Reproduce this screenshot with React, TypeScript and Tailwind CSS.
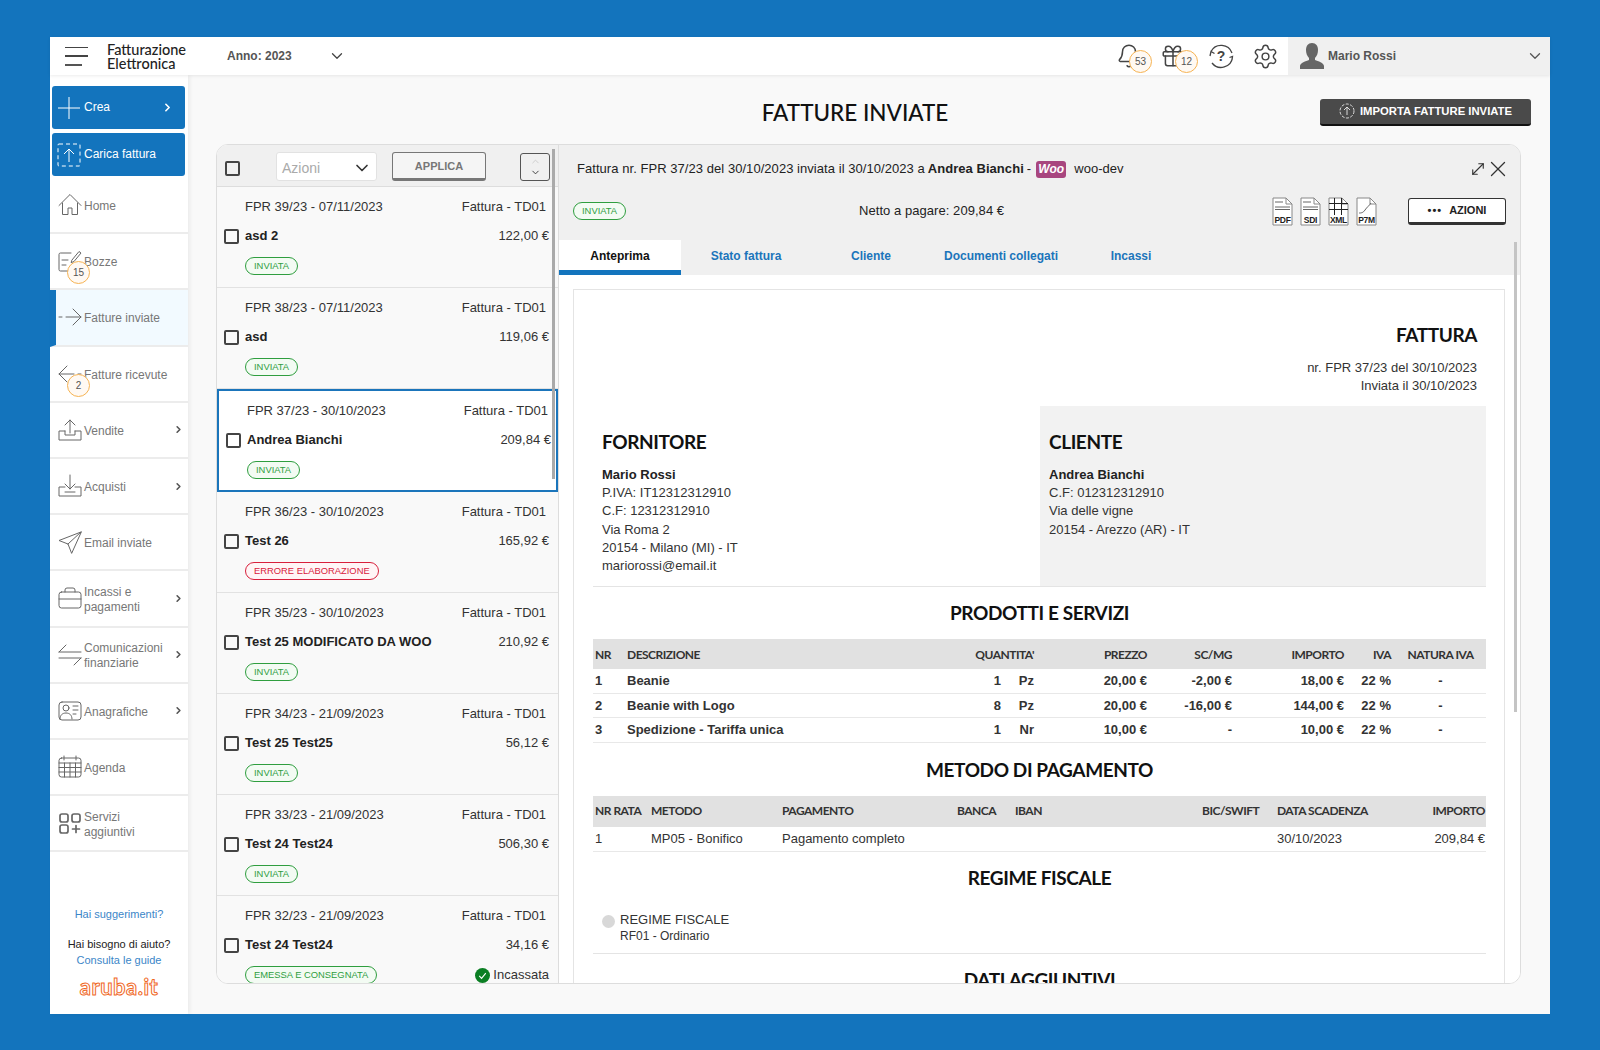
import {
  Bell,
  ChevronDown,
  ChevronRight,
  ChevronUp,
  Gift,
  MoveDiagonal,
  Settings,
  X,
} from "lucide-react";
import type { ReactNode } from "react";

type Invoice = {
  code: string;
  name: string;
  amount: string;
  status: string;
  tone?: "green" | "red";
  selected?: boolean;
  paid?: boolean;
};

const invoices: Invoice[] = [
  { code: "FPR 39/23 - 07/11/2023", name: "asd 2", amount: "122,00 €", status: "INVIATA" },
  { code: "FPR 38/23 - 07/11/2023", name: "asd", amount: "119,06 €", status: "INVIATA" },
  { code: "FPR 37/23 - 30/10/2023", name: "Andrea Bianchi", amount: "209,84 €", status: "INVIATA", selected: true },
  { code: "FPR 36/23 - 30/10/2023", name: "Test 26", amount: "165,92 €", status: "ERRORE ELABORAZIONE", tone: "red" },
  { code: "FPR 35/23 - 30/10/2023", name: "Test 25 MODIFICATO DA WOO", amount: "210,92 €", status: "INVIATA" },
  { code: "FPR 34/23 - 21/09/2023", name: "Test 25 Test25", amount: "56,12 €", status: "INVIATA" },
  { code: "FPR 33/23 - 21/09/2023", name: "Test 24 Test24", amount: "506,30 €", status: "INVIATA" },
  { code: "FPR 32/23 - 21/09/2023", name: "Test 24 Test24", amount: "34,16 €", status: "EMESSA E CONSEGNATA", paid: true },
];

const products = [
  ["1", "Beanie", "1", "Pz", "20,00 €", "-2,00 €", "18,00 €", "22 %", "-"],
  ["2", "Beanie with Logo", "8", "Pz", "20,00 €", "-16,00 €", "144,00 €", "22 %", "-"],
  ["3", "Spedizione - Tariffa unica", "1", "Nr", "10,00 €", "-", "10,00 €", "22 %", "-"],
];

const Icon = ({ children, size = 24 }: { children: ReactNode; size?: number }) => (
  <svg
    width={size}
    height={size}
    viewBox="0 0 24 24"
    fill="none"
    stroke="currentColor"
    strokeWidth="1"
    strokeLinecap="round"
    strokeLinejoin="round"
  >
    {children}
  </svg>
);

const navIcons: Record<string, ReactNode> = {
  home: <path d="M1 12.500 12 1.500l11 11M4.500 10v11.500h5.500V15h4v6.500h5.500V10" />,
  draft: (
    <>
      <path d="M13 4H2.500A1.500 1.500 0 0 0 1 5.500v15A1.500 1.500 0 0 0 2.500 22H14M4 11h6M4 16h4" />
      <path d="m14 11 7-8.500 2 1.500-7 8.500-2.500 1z" />
    </>
  ),
  sent: <path d="M1 12h3M8 12h15M15 4l8 8-8 8" />,
  received: <path d="M23 12h-3M16 12H1M9 4l-8 8 8 8" />,
  sales: <path d="M12 15V2M7 7l5-5 5 5M7 13H1v9h22v-9h-6M7 13v4h10v-4" />,
  buy: <path d="M12 1v14M7 10l5 5 5-5M7 13H1v9h22v-9h-6M7 18h10" />,
  mail: <path d="M23 2 1 10.500l9 3.500 3.500 9zM10 14 23 2" />,
  case: (
    <>
      <rect x="1" y="6" width="22" height="16" rx="2.500" />
      <path d="M7 6V4a2 2 0 0 1 2-2h6a2 2 0 0 1 2 2v2M1 13h22" />
    </>
  ),
  swap: <path d="M1 9h22M8 2 1 9M23 15H1M16 22l7-7" />,
  card: (
    <>
      <rect x="1" y="3" width="22" height="18" rx="3" />
      <circle cx="8" cy="9" r="3" />
      <path d="M2 20c0-4 2.500-6 6-6s6 2 6 6M15 7h5M15 11h5M15 15h3" />
    </>
  ),
  calendar: (
    <>
      <rect x="1" y="3" width="22" height="19" rx="2.500" />
      <path d="M6 1v4M18 1v4M1 8h22M1 12.500h22M1 17h22M6.500 8v14M12 8v14M17.500 8v14" />
    </>
  ),
  services: (
    <g strokeWidth="1.700">
      <rect x="2" y="3" width="8" height="8" rx="2" />
      <rect x="14" y="3" width="8" height="8" rx="2" />
      <rect x="2" y="14" width="8" height="8" rx="2" />
      <path d="M18 14.500v7M14.500 18h7" />
    </g>
  ),
};

const navItems = [
  { id: "home", label: "Home" },
  { id: "draft", label: "Bozze", badge: "15" },
  { id: "sent", label: "Fatture inviate", active: true },
  { id: "received", label: "Fatture ricevute", badge: "2" },
  { id: "sales", label: "Vendite", arrow: true },
  { id: "buy", label: "Acquisti", arrow: true },
  { id: "mail", label: "Email inviate" },
  { id: "case", label: "Incassi e pagamenti", arrow: true },
  { id: "swap", label: "Comunicazioni finanziarie", arrow: true },
  { id: "card", label: "Anagrafiche", arrow: true },
  { id: "calendar", label: "Agenda" },
  { id: "services", label: "Servizi aggiuntivi" },
];

const CountBadge = ({ value, className }: { value: string; className?: string }) => (
  <span
    className={`flex h-[23px] w-[23px] items-center justify-center rounded-full border border-[#f6b352] bg-[#fff9f3] text-[10px] text-[#555] ${className}`}
  >
    {value}
  </span>
);

const Checkbox = () => (
  <span className="block h-[15px] w-[15px] shrink-0 rounded-[2px] border-2 border-[#444]" />
);

const StatusPill = ({ label, tone = "green" }: { label: string; tone?: "green" | "red" }) => (
  <span
    className={`inline-flex h-[18px] items-center rounded-full border px-[8px] text-[9.400px] ${
      tone === "red"
        ? "border-[#d8203c] bg-[#fff5f6] text-[#d8203c]"
        : "border-[#2f9e3f] bg-[#f3fbf3] text-[#2f9e3f]"
    }`}
  >
    {label}
  </span>
);

const InvoiceRow = ({ invoice }: { invoice: Invoice }) => (
  <div
    className={
      invoice.selected
        ? "h-[103px] shrink-0 border-2 border-[#1b75bb] bg-white pl-[7px] pr-[5px] pt-[10px]"
        : "h-[101px] shrink-0 border-b border-[#e2e2e2] pl-[7px] pr-[9px] pt-[10px]"
    }
  >
    <div className="flex h-[20px] items-center justify-between text-[13px] text-[#333]">
      <span className="pl-[21px]">{invoice.code}</span>
      <span className="pr-[3px]">Fattura - TD01</span>
    </div>
    <div className="mt-[9px] flex h-[20px] items-center">
      <span className="w-[21px]">
        <Checkbox />
      </span>
      <span className="flex-1 text-[13px] font-bold text-[#222]">{invoice.name}</span>
      <span className="text-[13px] text-[#333]">{invoice.amount}</span>
    </div>
    <div className="mt-[11px] flex h-[18px] items-center justify-between pl-[21px]">
      <StatusPill label={invoice.status} tone={invoice.tone} />
      {invoice.paid && (
        <span className="flex items-center gap-[3px] text-[13px] text-[#333]">
          <svg width="15" height="15" viewBox="0 0 16 16">
            <circle cx="8" cy="8" r="8" fill="#0b7f24" />
            <path d="m4.500 8.500 2.500 2.500 4.500-5.500" fill="none" stroke="#fff" strokeWidth="1.200" />
          </svg>
          Incassata
        </span>
      )}
    </div>
  </div>
);

const FileIcon = ({ label }: { label: string }) => (
  <svg width="21" height="29" viewBox="0 0 21 29">
    <path d="M1 1h13l6 6v21H1z" fill="#fff" stroke="#888" />
    <path d="M14 1v6h6" fill="none" stroke="#888" />
    {label === "XML" ? (
      <path d="M1 6.500h19M1 12.500h19M6.500 1v17M13.500 1v17" stroke="#222" fill="none" />
    ) : label === "P7M" ? (
      <path d="M3 16c2 0 4 0 6-3s4-4 6-7" stroke="#666" fill="none" />
    ) : (
      <path d="M3 5h8M3 10h15M3 12.500h15" stroke="#666" fill="none" />
    )}
    <text x="10.500" y="25.500" textAnchor="middle" fontSize="8.500" fontWeight="700" fill="#222" stroke="none" letterSpacing="-0.3">
      {label}
    </text>
  </svg>
);

const Heading = ({ children, className }: { children: ReactNode; className?: string }) => (
  <h2 className={`font-['Lato',sans-serif] text-[19px] font-bold leading-[24px] tracking-[-0.4px] text-[#111] ${className}`}>
    {children}
  </h2>
);

const headCell = "font-['Lato',sans-serif] text-[12px] font-bold tracking-[-0.5px] text-[#333]";
const productCols = "grid grid-cols-[34px_333px_41px_33px_113px_85px_112px_47px_96px] items-center";
const paymentCols = "grid grid-cols-[58px_131px_175px_58px_187px_75px_104px_106px] items-center";

const Sidebar = () => (
  <aside className="z-10 flex w-[138px] shrink-0 flex-col bg-white shadow-[2px_0_4px_rgba(0,0,0,0.06)]">
    <div className="flex flex-col gap-[4px] pl-[2px] pr-[3px] pt-[11px]">
      <div className="flex h-[43px] items-center rounded-[3px] bg-[#1374bd] pl-[5px] pr-[11px] text-[12px] text-white">
        <svg width="24" height="24" viewBox="0 0 24 24" stroke="#fff" strokeWidth="1">
          <path d="M12 1v22M1 12h22" />
        </svg>
        <span className="ml-[3px] flex-1 pb-[2px]">Crea</span>
        <ChevronRight size={13} strokeWidth={3} />
      </div>
      <div className="flex h-[43px] items-center rounded-[3px] bg-[#1374bd] pl-[5px] text-[12px] text-white">
        <svg width="24" height="24" viewBox="0 0 24 24" fill="none" stroke="#fff" strokeWidth="1">
          <rect x="1" y="1" width="22" height="22" rx="1" strokeDasharray="4 3" />
          <path d="M12 19V6M7 11l5-5 5 5" />
        </svg>
        <span className="ml-[3px] pb-[2px]">Carica fattura</span>
      </div>
    </div>
    <nav className="mt-[2px] flex flex-col">
      {navItems.map((item) => (
        <div
          key={item.id}
          className={`relative flex h-[56.200px] items-center border-b-2 border-[#ececec] pr-[4px] text-[12px] leading-[15px] text-[#777] ${
            item.active ? "border-l-[6px] border-l-[#1374bd] bg-[#f2faff] pl-[2px]" : "pl-[8px]"
          }`}
        >
          <span className="w-[26px] shrink-0 text-[#666]">
            <Icon>{navIcons[item.id]}</Icon>
          </span>
          <span className="flex-1 pt-[3px]">
            <span className="block max-w-[88px]">{item.label}</span>
          </span>
          {item.arrow && <ChevronRight size={11} strokeWidth={3.5} className="text-[#555]" />}
          {item.badge && <CountBadge value={item.badge} className="absolute left-[17px] top-[27px]" />}
        </div>
      ))}
    </nav>
    <div className="mt-[54px] text-center text-[11px] leading-[16px]">
      <p className="text-[#3b86c8]">Hai suggerimenti?</p>
      <p className="mt-[14px] text-[#222]">Hai bisogno di aiuto?</p>
      <p className="text-[#3b86c8]">Consulta le guide</p>
      <p className="mt-[4px] font-['Lato',sans-serif] text-[22px] font-bold leading-[30px] tracking-[0.5px] text-white [-webkit-text-stroke:1px_#f0681f]">
        aruba.it
      </p>
    </div>
  </aside>
);

const TopBar = () => (
  <header className="z-20 flex h-[38px] shrink-0 items-center bg-white shadow-[0_1px_3px_rgba(0,0,0,0.08)]">
    <div className="ml-[15px] flex w-[23px] flex-col gap-[7px]">
      <span className="h-[1.500px] bg-[#444]" />
      <span className="h-[1.500px] bg-[#444]" />
      <span className="h-[2px] w-[17px] bg-[#555]" />
    </div>
    <div className="ml-[19px] w-[120px] pt-[1px] font-['Lato',sans-serif] text-[14.500px] font-medium leading-[14px] text-[#222]">
      Fatturazione
      <br />
      Elettronica
    </div>
    <span className="text-[12px] font-bold text-[#555]">Anno: 2023</span>
    <ChevronDown size={18} strokeWidth={1.700} className="ml-[36px] text-[#444]" />
    <div className="ml-auto flex items-center text-[#444]">
      <div className="relative w-[44px]">
        <Bell size={26} strokeWidth={1.400} />
        <CountBadge value="53" className="absolute left-[13px] top-[7px]" />
      </div>
      <div className="relative w-[46px]">
        <Gift size={26} strokeWidth={1.400} />
        <CountBadge value="12" className="absolute left-[15px] top-[7px]" />
      </div>
      <svg width="26" height="26" viewBox="0 0 26 26" fill="none" stroke="#444" strokeWidth="1.300" className="ml-[2px]">
        <path d="M3 8.500A11.500 11.500 0 0 1 24 10M24.500 14A11.500 11.500 0 0 1 4 20M2 13l1-4.500 3.500 2M24 17l.500-3.500-3 1" />
        <text x="13" y="18" textAnchor="middle" fontSize="14" fontWeight="700" fill="#444" stroke="none">
          ?
        </text>
      </svg>
      <Settings size={27} strokeWidth={1.300} className="ml-[18px]" />
    </div>
    <div className="ml-[9px] flex h-full w-[262px] items-center bg-[#f0f0f0] pl-[12px] pr-[6px]">
      <svg width="24" height="26" viewBox="0 0 24 26" fill="#666">
        <path d="M12 0c4 0 6 3 6 7 0 3-1 6-3 8v2c3 1 9 3 9 6v3H0v-3c0-3 6-5 9-6v-2c-2-2-3-5-3-8 0-4 2-7 6-7z" />
      </svg>
      <span className="ml-[4px] flex-1 text-[12px] font-bold text-[#555]">Mario Rossi</span>
      <ChevronDown size={18} strokeWidth={1.700} className="text-[#555]" />
    </div>
  </header>
);

const InvoiceList = () => (
  <div className="relative flex w-[341px] shrink-0 flex-col overflow-hidden bg-[#f9f9f9]">
    <div className="flex h-[42px] shrink-0 items-center border-b border-[#ddd] bg-[#f0f0f0] pl-[8px] pt-[2px]">
      <span className="pt-[3px]">
        <Checkbox />
      </span>
      <div className="ml-[36px] flex h-[29px] w-[101px] items-center justify-between rounded-[3px] border border-[#e2e2e2] bg-white pl-[5px] pr-[4px] text-[14px] text-[#aaa]">
        <span className="pt-[4px]">Azioni</span>
        <ChevronDown size={20} strokeWidth={2} className="mt-[2px] text-[#333]" />
      </div>
      <div className="ml-[15px] flex h-[29px] w-[94px] items-center justify-center rounded-[3px] border border-b-[3px] border-[#777] bg-[#f5f5f5] pt-[2px] text-[11px] font-bold text-[#777]">
        APPLICA
      </div>
      <div className="ml-[34px] flex h-[28px] w-[30px] flex-col items-center justify-center rounded-[3px] border border-[#555]">
        <ChevronUp size={11} className="text-[#ccc]" />
        <ChevronDown size={11} className="text-[#333]" />
      </div>
    </div>
    {invoices.map((invoice) => (
      <InvoiceRow key={invoice.code} invoice={invoice} />
    ))}
    <span className="absolute left-[335px] top-[4px] h-[330px] w-[3px] bg-[#aaa]" />
  </div>
);

const DetailHeader = () => (
  <div className="shrink-0 bg-[#f0f0f0]">
    <div className="flex h-[42px] items-center pl-[18px] pr-[9px] pt-[6px] text-[13px] tracking-[0.05px] text-[#222]">
      <span>Fattura nr. FPR 37/23 del 30/10/2023 inviata il 30/10/2023 a </span>
      <span className="ml-[3px] font-bold">Andrea Bianchi</span>
      <span className="ml-[3px]">-</span>
      <span className="ml-[5px] flex h-[17px] w-[30px] items-center justify-center rounded-[3px] bg-[#a8467f] text-[12px] font-bold italic text-white">
        Woo
      </span>
      <span className="ml-[8px]">woo-dev</span>
      <MoveDiagonal size={18} strokeWidth={1.500} className="ml-auto text-[#333]" />
      <X size={26} strokeWidth={1.200} className="ml-[-2px] text-[#333]" />
    </div>
    <div className="flex h-[53px] items-center pb-[5px] pl-[14px] pr-[14px]">
      <StatusPill label="INVIATA" />
      <span className="ml-[233px] text-[13px] tracking-[0.05px] text-[#222]">Netto a pagare: 209,84 €</span>
      <div className="ml-auto flex items-center gap-[7px]">
        <FileIcon label="PDF" />
        <FileIcon label="SDI" />
        <FileIcon label="XML" />
        <FileIcon label="P7M" />
      </div>
      <div className="ml-[31px] flex h-[27px] w-[98px] items-center justify-center gap-[7px] rounded-[3px] border border-b-[3px] border-[#333] bg-white text-[11px] font-bold text-[#222]">
        <span className="tracking-[1px]">•••</span>
        AZIONI
      </div>
    </div>
    <div className="flex h-[35px] text-[12px] font-bold text-[#1b75bb]">
      <span className="flex w-[122px] items-center justify-center border-b-[5px] border-[#1374bd] bg-white pt-[1px] text-[#111]">
        Anteprima
      </span>
      <span className="flex w-[130px] items-center justify-center pb-[4px]">Stato fattura</span>
      <span className="flex w-[120px] items-center justify-center pb-[4px]">Cliente</span>
      <span className="flex w-[140px] items-center justify-center pb-[4px]">Documenti collegati</span>
      <span className="flex w-[120px] items-center justify-center pb-[4px]">Incassi</span>
    </div>
  </div>
);

const Party = ({ title, lines, tinted }: { title: string; lines: string[]; tinted?: boolean }) => (
  <div className={tinted ? "w-[446px] bg-[#f2f2f2] pl-[9px] pt-[24px]" : "flex-1 pl-[9px] pt-[24px]"}>
    <Heading>{title}</Heading>
    <div className="mt-[12px] text-[13px] leading-[18.200px] text-[#333]">
      <p className="font-bold text-[#222]">{lines[0]}</p>
      {lines.slice(1).map((line) => (
        <p key={line}>{line}</p>
      ))}
    </div>
  </div>
);

const InvoiceDocument = () => (
  <div className="flex-1 overflow-hidden bg-white pl-[14px] pr-[15px] pt-[14px]">
    <div className="h-[720px] border border-[#e4e4e4] pl-[19px] pr-[18px]">
      <div className="h-[116px] pr-[9px] pt-[33px] text-right text-[13px] leading-[18.200px] text-[#333]">
        <Heading>FATTURA</Heading>
        <p className="mt-[12px]">nr. FPR 37/23 del 30/10/2023</p>
        <p>Inviata il 30/10/2023</p>
      </div>
      <div className="flex h-[181px] border-b border-[#e4e4e4]">
        <Party
          title="FORNITORE"
          lines={[
            "Mario Rossi",
            "P.IVA: IT12312312910",
            "C.F: 12312312910",
            "Via Roma 2",
            "20154 - Milano (MI) - IT",
            "mariorossi@email.it",
          ]}
        />
        <Party
          tinted
          title="CLIENTE"
          lines={["Andrea Bianchi", "C.F: 012312312910", "Via delle vigne", "20154 - Arezzo (AR) - IT"]}
        />
      </div>

      <Heading className="mt-[14px] text-center">PRODOTTI E SERVIZI</Heading>
      <div className={`${productCols} mt-[14px] h-[30px] bg-[#e1e1e1] pt-[1px] ${headCell}`}>
        <span className="pl-[2px]">NR</span>
        <span>DESCRIZIONE</span>
        <span className="col-span-2 text-right">QUANTITA'</span>
        <span className="text-right">PREZZO</span>
        <span className="text-right">SC/MG</span>
        <span className="text-right">IMPORTO</span>
        <span className="text-right">IVA</span>
        <span className="pl-[3px] text-center">NATURA IVA</span>
      </div>
      {products.map((row) => (
        <div key={row[0]} className={`${productCols} h-[24.670px] border-b border-[#e8e8e8] text-[13px] font-bold text-[#333]`}>
          <span className="pl-[2px]">{row[0]}</span>
          <span>{row[1]}</span>
          <span className="text-right">{row[2]}</span>
          <span className="text-right">{row[3]}</span>
          <span className="text-right">{row[4]}</span>
          <span className="text-right">{row[5]}</span>
          <span className="text-right">{row[6]}</span>
          <span className="text-right">{row[7]}</span>
          <span className="pl-[3px] text-center">{row[8]}</span>
        </div>
      ))}

      <Heading className="mt-[15px] text-center">METODO DI PAGAMENTO</Heading>
      <div className={`${paymentCols} mt-[14px] h-[31px] bg-[#e1e1e1] ${headCell}`}>
        <span className="pl-[2px]">NR RATA</span>
        <span>METODO</span>
        <span>PAGAMENTO</span>
        <span>BANCA</span>
        <span>IBAN</span>
        <span>BIC/SWIFT</span>
        <span>DATA SCADENZA</span>
        <span className="pr-[2px] text-right">IMPORTO</span>
      </div>
      <div className={`${paymentCols} h-[25px] border-b border-[#e8e8e8] text-[13px] text-[#333]`}>
        <span className="pl-[2px]">1</span>
        <span>MP05 - Bonifico</span>
        <span>Pagamento completo</span>
        <span />
        <span />
        <span />
        <span>30/10/2023</span>
        <span className="pr-[2px] text-right">209,84 €</span>
      </div>

      <Heading className="mt-[14px] text-center">REGIME FISCALE</Heading>
      <div className="mt-[21px] flex h-[43px] border-b border-[#e4e4e4] pl-[9px]">
        <span className="mt-[4px] h-[13px] w-[13px] rounded-full bg-[#d8d8d8]" />
        <div className="ml-[5px] text-[#333]">
          <p className="text-[13px] leading-[18px]">REGIME FISCALE</p>
          <p className="text-[12px] leading-[14px]">RF01 - Ordinario</p>
        </div>
      </div>
      <Heading className="mt-[14px] text-center">DATI AGGIUNTIVI</Heading>
    </div>
  </div>
);

export default function App() {
  return (
    <div className="h-[1050px] w-[1600px] overflow-hidden bg-[#1374bd] px-[50px] pt-[37px] font-['Liberation_Sans',Arial,sans-serif]">
      <div className="flex h-[977px] flex-col bg-[#f9f9f9]">
        <TopBar />
        <div className="flex min-h-0 flex-1">
          <Sidebar />
          <main className="min-w-0 flex-1 pl-[28px] pr-[29px]">
            <div className="mr-[-10px] flex h-[69px] items-center pl-[174px] pt-[6px]">
              <h1 className="flex-1 text-center font-['Lato',sans-serif] text-[22.500px] font-medium text-[#111]">
                FATTURE INVIATE
              </h1>
              <div className="mt-[-1px] flex h-[27px] w-[211px] items-center justify-center gap-[5px] rounded-[3px] border-b-2 border-[#111] bg-[#4a4a4a] text-[11.300px] font-bold text-white">
                <svg width="16" height="16" viewBox="0 0 16 16" fill="none" stroke="#fff" strokeWidth="0.800">
                  <circle cx="8" cy="8" r="7" strokeDasharray="3 1.500" />
                  <path d="M8 12V4.500M5 7l3-3 3 3" />
                </svg>
                IMPORTA FATTURE INVIATE
              </div>
            </div>
            <div className="flex h-[840px] overflow-hidden rounded-xl border border-[#ddd] bg-white">
              <InvoiceList />
              <div className="relative flex min-w-0 flex-1 flex-col border-l border-[#ddd]">
                <DetailHeader />
                <InvoiceDocument />
                <span className="absolute right-[3px] top-[97px] h-[470px] w-[3px] bg-[#c4c4c4]" />
              </div>
            </div>
          </main>
        </div>
      </div>
    </div>
  );
}
